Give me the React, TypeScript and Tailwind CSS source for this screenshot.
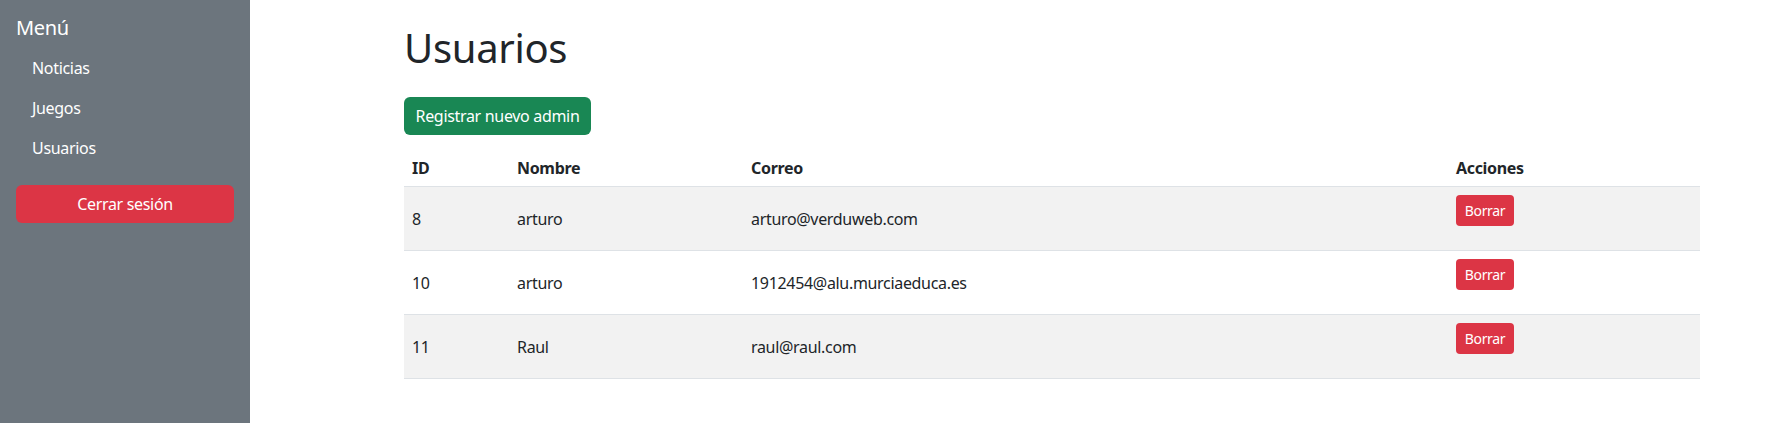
const users = [
  { id: 8, nombre: 'arturo', correo: 'arturo@verduweb.com' },
  { id: 10, nombre: 'arturo', correo: '1912454@alu.murciaeduca.es' },
  { id: 11, nombre: 'Raul', correo: 'raul@raul.com' },
]

const Sidebar = () => (
  <aside className="w-[250px] shrink-0 bg-[#6c757d] p-4 text-white">
    <h5 className="mb-2 text-[20px] leading-[24px] font-normal">Menú</h5>
    <nav className="flex flex-col">
      {['Noticias', 'Juegos', 'Usuarios'].map((item) => (
        <a key={item} href="#" className="px-4 py-2 text-base leading-6 text-white">
          {item}
        </a>
      ))}
    </nav>
    <button className="mt-[17px] h-[38px] w-full rounded-md bg-[#dc3545] text-base text-white">
      Cerrar sesión
    </button>
  </aside>
)

export default function App() {
  return (
    <div className="flex min-h-screen bg-white font-['Noto_Sans',sans-serif] tracking-[-0.02em] text-[#212529]">
      <Sidebar />
      <main className="flex-1 pl-[154px] pt-6">
        <div className="w-[1296px]">
          <h1 className="mb-[25px] text-[40px] leading-[48px] font-normal">Usuarios</h1>
          <button className="h-[38px] w-[187px] rounded-md bg-[#198754] text-base text-white">
            Registrar nuevo admin
          </button>

          <table className="mt-[11px] w-full table-fixed border-collapse text-base">
            <colgroup>
              <col className="w-[105px]" />
              <col className="w-[234px]" />
              <col className="w-[705px]" />
              <col className="w-[252px]" />
            </colgroup>
            <thead>
              <tr className="border-b border-[#dee2e6]">
                <th className="px-2 pt-[10px] pb-[6px] text-left leading-6 font-bold">ID</th>
                <th className="px-2 pt-[10px] pb-[6px] text-left leading-6 font-bold">Nombre</th>
                <th className="px-2 pt-[10px] pb-[6px] text-left leading-6 font-bold">Correo</th>
                <th className="px-2 pt-[10px] pb-[6px] text-left leading-6 font-bold">Acciones</th>
              </tr>
            </thead>
            <tbody>
              {users.map((u, i) => (
                <tr key={u.id} className={`border-b border-[#dee2e6] ${i % 2 === 0 ? 'bg-[#f2f2f2]' : 'bg-white'}`}>
                  <td className="h-16 px-2 align-middle leading-6">{u.id}</td>
                  <td className="h-16 px-2 align-middle leading-6">{u.nombre}</td>
                  <td className="h-16 px-2 align-middle leading-6">{u.correo}</td>
                  <td className="h-16 px-2 pt-2 align-top">
                    <button className="h-[31px] w-[58px] rounded-[4px] bg-[#dc3545] text-sm text-white">
                      Borrar
                    </button>
                  </td>
                </tr>
              ))}
            </tbody>
          </table>
        </div>
      </main>
    </div>
  )
}
